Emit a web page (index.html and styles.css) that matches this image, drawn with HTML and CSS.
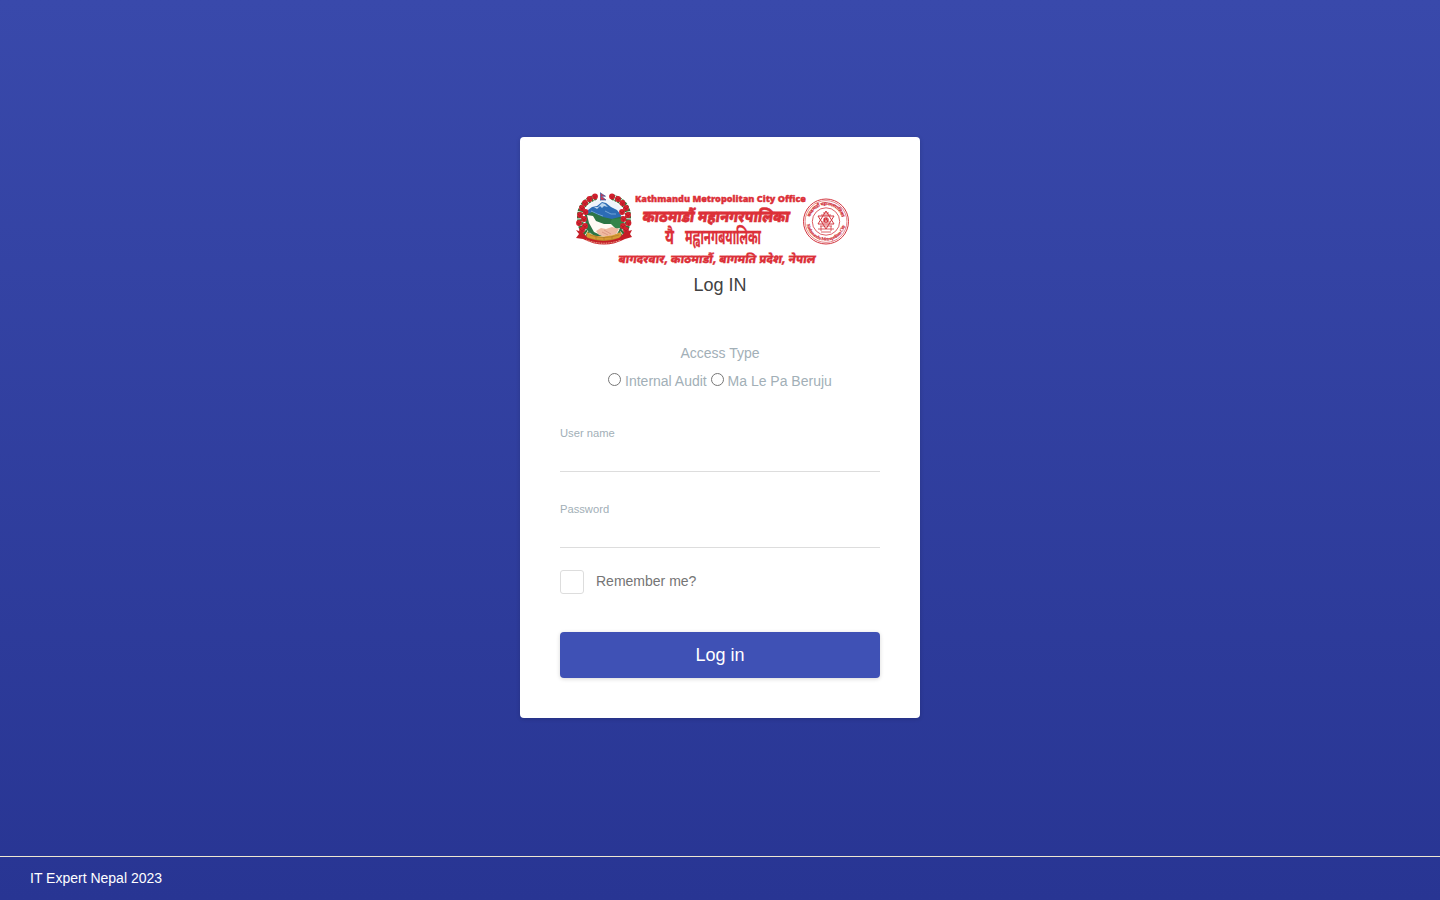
FILE: index.html
```html
<!DOCTYPE html>
<html lang="en">
<head>
<meta charset="utf-8">
<title>Log in</title>
<link rel="stylesheet" href="styles.css">
</head>
<body>
<main class="page">
  <form class="card">
    <svg class="logo" viewBox="570 186 284 82" role="img">
      <defs>
        <g id="flower"><circle r="2.9" fill="#d4202e"/><path d="M-2-1 0 1 2-1M0 1v1.5" stroke="#a01925" stroke-width=".6" fill="none"/></g>
        <path id="seal-top" d="M810.2 217.3a16.4 16.4 0 0 1 31.6 0"/>
        <path id="seal-bottom" d="M806.9 224.5a19.4 19.4 0 0 0 38.2 0"/>
      </defs>
      <g>
        <circle cx="604" cy="219" r="20" fill="#eef4fb"/>
        <path d="M585 216 588 210 592 207 597 206 602 202 606 203 611 207 617 210 621 215 620 222 608 220 596 215Z" fill="#2c6cb5"/>
        <path d="M594 207l4 0 4-4 3 1 3 3-4-1-2 2-2-2-3 3Z" fill="#b9d5ee"/>
        <path d="M605 211 611 214 616 214M591 211 597 214 603 216" stroke="#79a9d8" stroke-width=".9" fill="none"/>
        <path d="M585 215 592 212 603 217 612 219 623 216 624 225 621 231 613 236 594 236 586 229Z" fill="#2c7545"/>
        <path d="M587 215 593 216 596 221 604 224 613 224 621 225 618 233 609 239 594 232 589 223Z" fill="#fff9f3"/>
        <path d="M612 219 624 218 623 227 616 229 610 223Z" fill="#34854a"/>
        <path d="M596 231 601 228 606 229 612 227 619 229 616 234 607 237 599 235Z" fill="#efb9a0"/>
        <path d="M604 230l7 4M602 232l6 3" stroke="#cf8270" stroke-width=".6"/>
        <path d="M596 197Q580 202 580 217T590 235M612 197Q628 202 628 217T618 235" fill="none" stroke="#34733a" stroke-width="6" stroke-dasharray="2.5 .8"/>
        <use href="#flower" x="595" y="196.5"/><use href="#flower" x="589.5" y="199"/><use href="#flower" x="585" y="203"/><use href="#flower" x="582" y="208"/><use href="#flower" x="585.5" y="212"/><use href="#flower" x="580" y="215"/><use href="#flower" x="584" y="219"/><use href="#flower" x="579" y="223"/><use href="#flower" x="585" y="226"/><use href="#flower" x="582" y="230"/>
        <use href="#flower" x="612" y="196.5"/><use href="#flower" x="618" y="199"/><use href="#flower" x="622.5" y="203"/><use href="#flower" x="626" y="208"/><use href="#flower" x="622" y="212"/><use href="#flower" x="628" y="215"/><use href="#flower" x="623.5" y="219"/><use href="#flower" x="628.5" y="223"/><use href="#flower" x="623" y="226"/><use href="#flower" x="626" y="230"/>
        <path d="M600.5 192.5v8M600.5 193l5 3.2h-4l4.5 3.8h-5.5" fill="#d33750" stroke="#34539b" stroke-width=".7"/>
        <path d="M587 232Q596 237 604 236.500T621 232L622 239Q605 246 586 239Z" fill="#d79c32"/>
        <path d="M590 235q14 5 29 0M588 238q15 5 32 0M596 236v4M604 237v4M612 236v4" fill="none" stroke="#a8742a" stroke-width=".6"/>
        <path d="M576 230 582 232 588 238Q604 244 619 238L625 232 632 230 630 234 632 237 625 239Q604 250 583 239L576 238 579 234Z" fill="#c51d26"/>
        <path d="M586 240Q604 246.500 621 240" fill="none" stroke="#f3c8aa" stroke-width="1" stroke-dasharray="1 .7"/>
      </g>
      <g class="logo-text">
        <text class="logo-latin" x="635" y="202" textLength="171" lengthAdjust="spacingAndGlyphs">Kathmandu Metropolitan City Office</text>
        <text class="logo-city" transform="translate(642 222) skewX(-8) scale(1 1.16)" textLength="147" lengthAdjust="spacingAndGlyphs">काठमाडौं महानगरपालिका</text>
        <text class="logo-newari" transform="translate(665 244) scale(1 1.15)" textLength="9" lengthAdjust="spacingAndGlyphs">यै</text>
        <text class="logo-newari" transform="translate(685 244) scale(1 1.15)" textLength="76" lengthAdjust="spacingAndGlyphs">मह्वानगबयालिका</text>
        <text class="logo-address" transform="translate(618 263) skewX(-8) scale(1 1.08)" textLength="197" lengthAdjust="spacingAndGlyphs">बागदरवार, काठमाडौं, बागमति प्रदेश, नेपाल</text>
      </g>
      <g fill="none" stroke="#d33740">
        <circle cx="826" cy="221.5" r="22.5" stroke-width="1"/>
        <circle cx="826" cy="221.5" r="20.9" stroke-width=".6"/>
        <circle cx="826" cy="221.5" r="13.7" stroke-width=".8"/>
        <path d="M826 211 834 224H818ZM826 229 834 216H818Z" stroke-width="1"/>
        <path d="M823 213h6M821 215h10M822 222h8M820 226h12M818 229h16M821 232h10M821 226v5M831 226v5" stroke-width=".8"/>
        <circle cx="826" cy="220" r="2.7" fill="#d33740" stroke="none"/>
        <path d="M825 219h.5M827 219h.5M825 221h2" stroke="#fff" stroke-width=".8"/>
      </g>
      <g class="seal-text">
        <text class="seal-nepali"><textPath href="#seal-top" textLength="42">काठमाडौं महानगरपालिका</textPath></text>
        <text class="seal-latin"><textPath href="#seal-bottom" textLength="53">Kathmandu Metropolitan City</textPath></text>
      </g>
    </svg>
    <h1 class="title">Log IN</h1>
    <p class="access-title">Access Type</p>
    <div class="access-options"><input class="radio" type="radio" name="access" id="internal"> <label for="internal">Internal Audit</label> <input class="radio" type="radio" name="access" id="beruju"> <label for="beruju">Ma Le Pa Beruju</label></div>
    <label class="field"><span>User name</span><input type="text"></label>
    <label class="field"><span>Password</span><input type="password"></label>
    <label class="remember"><input type="checkbox"><span>Remember me?</span></label>
    <button class="submit" type="button">Log in</button>
  </form>
</main>
<footer class="footer">IT Expert Nepal 2023</footer>
</body>
</html>
```
FILE: styles.css
```css
* { box-sizing: border-box; }
html { height: 100%; }
body {
  height: 100%;
  margin: 0;
  display: flex;
  flex-direction: column;
  overflow: hidden;
  background: linear-gradient(#3949ab, #283593);
  font: 14px/20px "Liberation Sans", Arial, sans-serif;
}
.page { flex: 1; display: flex; justify-content: center; align-items: flex-start; padding-top: 137px; }
.card {
  width: 400px;
  height: 581px;
  padding: 49px 40px 40px;
  display: flex;
  flex-direction: column;
  border-radius: 4px;
  background: #fff;
  box-shadow: 0 1px 4px rgba(0, 0, 0, .16);
  color: #a2afb7;
}
.logo { width: 284px; height: 82px; margin-left: 10px; flex: none; }
.logo-text { fill: #dc3038; stroke: #dc3038; stroke-width: .25px; }
.logo-latin { font: 900 9.5px "Noto Sans", sans-serif; stroke-width: .4px; }
.logo-city { font: 900 14px "Noto Sans Devanagari", "Noto Sans", sans-serif; stroke-width: .5px; }
.logo-newari { font: 700 18px "Noto Sans Devanagari", "Noto Sans", sans-serif; }
.logo-address { font: 900 11px "Noto Sans Devanagari", "Noto Sans", sans-serif; }
.seal-text { fill: #cf2832; stroke: #cf2832; stroke-width: .15px; }
.seal-nepali { font: 700 4.5px "Noto Sans Devanagari", "Noto Sans", sans-serif; }
.seal-latin { font: 700 4.5px "Liberation Serif", serif; }
.title { margin: 5px 0 0; color: #424242; font-size: 18px; font-weight: 400; line-height: 24px; text-align: center; }
.access-title { margin: 46px 0 0; text-align: center; }
.access-options { height: 20px; margin-top: 8px; text-align: center; white-space: nowrap; }
.radio { width: 13px; height: 13px; margin: 0; }
.field { height: 48px; margin-top: 33px; display: flex; flex-direction: column; border-bottom: 1px solid #ddd; font-size: 11.2px; line-height: 18px; }
.field input { width: 100%; height: 28px; border: 0; padding: 0; outline: 0; background: transparent; }
.field + .field { margin-top: 28px; }
.remember { height: 24px; margin-top: 22px; display: flex; gap: 12px; color: #757575; line-height: 22px; }
.remember input { width: 24px; height: 24px; margin: 0; appearance: none; border: 1px solid #ddd; border-radius: 3px; }
.submit { height: 46px; flex: none; margin-top: 38px; border: 0; border-radius: 4px; color: #fff; background: #3f51b5; font: 18px/24px "Liberation Sans", Arial, sans-serif; box-shadow: 0 1px 4px rgba(0, 0, 0, .16); }
.footer { height: 44px; padding: 11px 30px; border-top: 1px solid #eee8d2; color: #fff; }
```
